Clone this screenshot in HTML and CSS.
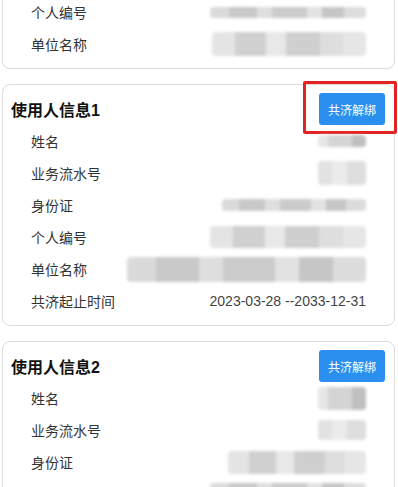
FILE: index.html
```html
<!DOCTYPE html>
<html lang="zh-CN">
<head>
    <meta charset="UTF-8">
    <meta name="viewport" content="width=device-width, initial-scale=1.0">
    <title>使用人信息</title>
    <link rel="stylesheet" href="styles.css">
</head>
<body>

<div class="list">
    <!-- 上一张卡片（已滚动） -->
    <div class="card cut">
        <div class="row"><span class="label">个人编号</span><span class="blur b-a w156 h11"></span></div>
        <div class="row"><span class="label">单位名称</span><span class="blur b-b w154 h24"></span></div>
    </div>

    <div class="card">
        <div class="card-head">
            <span class="title">使用人信息1</span>
            <button type="button" class="btn">共济解绑</button>
            <span class="mark"></span>
        </div>
        <div class="row"><span class="label">姓名</span><span class="blur b-c w48 h12"></span></div>
        <div class="row"><span class="label">业务流水号</span><span class="blur b-d w48 h24"></span></div>
        <div class="row"><span class="label">身份证</span><span class="blur b-a w144 h12"></span></div>
        <div class="row"><span class="label">个人编号</span><span class="blur b-b w156 h22"></span></div>
        <div class="row"><span class="label">单位名称</span><span class="blur b-a w239 h25"></span></div>
        <div class="row"><span class="label">共济起止时间</span><span class="value">2023-03-28 --2033-12-31</span></div>
    </div>

    <div class="card">
        <div class="card-head">
            <span class="title">使用人信息2</span>
            <button type="button" class="btn">共济解绑</button>
        </div>
        <div class="row"><span class="label">姓名</span><span class="blur b-c w48 h23"></span></div>
        <div class="row"><span class="label">业务流水号</span><span class="blur b-d w48 h20"></span></div>
        <div class="row"><span class="label">身份证</span><span class="blur b-b w138 h23"></span></div>
        <div class="row"><span class="label">个人编号</span><span class="blur b-a w156 h22"></span></div>
    </div>
</div>

</body>
</html>
```

FILE: styles.css
```css
body { margin: 0; background: #fff; font-family: "Liberation Sans", "Noto Sans CJK SC", sans-serif; color: #333; overflow: hidden; }
.list { padding: 0 3px 0 2px; }
.card { position: relative; border: 1px solid #dcdcdc; border-radius: 8px; padding: 0 8px 8px; margin-bottom: 15px; }
.card.cut { border-top: none; border-radius: 0 0 8px 8px; margin-top: -4px; }
.card-head { display: flex; justify-content: space-between; align-items: center; padding: 8px 1px 0 0; height: 32px; }
.title { font-size: 16px; font-weight: bold; color: #111; }
.btn { height: 32px; width: 66px; padding: 0; border: none; border-radius: 3px; background-color: #2b8ff0; color: #fff; font-size: 12px; font-family: "Noto Sans CJK SC", sans-serif; }
.mark { position: absolute; top: -4px; left: 300px; width: 88px; height: 47px; border: 3px solid #e52222; border-radius: 2px; }
.row { display: flex; justify-content: space-between; align-items: center; height: 32px; padding: 0 20px 0 20px; font-size: 14px; }
.label { color: #333; }
.value { color: #444; }

/* 打码区域 */
.blur { display: inline-block; filter: blur(1.5px); border-radius: 4px; }
.b-a { background: linear-gradient(90deg, #dadada 0 12%, #c9c9c9 12% 30%, #dedede 30% 40%, #cbcbcb 40% 62%, #e2e2e2 62% 72%, #c6c6c6 72% 86%, #dcdcdc 86%); }
.b-b { background: linear-gradient(90deg, #e4e4e4 0 15%, #d0d0d0 15% 35%, #e8e8e8 35% 48%, #cfcfcf 48% 70%, #dedede 70% 85%, #e6e6e6 85%); }
.b-c { background: linear-gradient(90deg, #e6e6e6 0 20%, #d4d4d4 20% 70%, #bfbfbf 70%); }
.b-d { background: linear-gradient(90deg, #e2e2e2 0 30%, #ebebeb 30% 60%, #dedede 60%); }
.w48 { width: 48px; }
.w138 { width: 138px; }
.w144 { width: 144px; }
.w154 { width: 154px; }
.w156 { width: 156px; }
.w239 { width: 239px; }
.h11 { height: 11px; }
.h12 { height: 12px; }
.h20 { height: 20px; }
.h22 { height: 22px; }
.h23 { height: 23px; }
.h24 { height: 24px; }
.h25 { height: 25px; }
```
